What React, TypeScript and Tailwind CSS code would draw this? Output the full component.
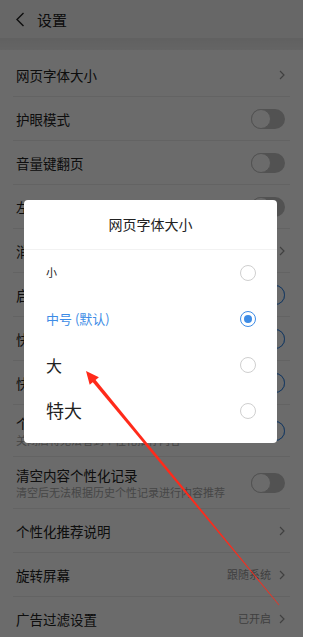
import React from 'react'

type Row = {
  title: string
  sub?: string
  toggle?: boolean
  on?: boolean
  value?: string
  chevron?: boolean
}

const rows: Row[] = [
  { title: '网页字体大小', chevron: true },
  { title: '护眼模式', toggle: true },
  { title: '音量键翻页', toggle: true },
  { title: '左手翻页模式', toggle: true },
  { title: '消息通知设置', chevron: true },
  { title: '启动时恢复上次浏览', toggle: true, on: true },
  { title: '快速翻页', toggle: true, on: true },
  { title: '快捷搜索', toggle: true, on: true },
  { title: '个性化推荐', sub: '关闭后将无法看到个性化推荐内容', toggle: true, on: true },
  { title: '清空内容个性化记录', sub: '清空后无法根据历史个性记录进行内容推荐', toggle: true },
  { title: '个性化推荐说明', chevron: true },
  { title: '旋转屏幕', value: '跟随系统', chevron: true },
  { title: '广告过滤设置', value: '已开启', chevron: true },
]

const options = [
  { label: '小', cls: 'text-[11px] text-[#222]' },
  { label: '中号 (默认)', cls: 'text-[13px] text-[#3d8ce6]', selected: true },
  { label: '大', cls: 'text-[16px] text-[#222]' },
  { label: '特大', cls: 'text-[18px] text-[#222]' },
]

function Chevron() {
  return (
    <svg width="6" height="10" viewBox="0 0 6 10" className="shrink-0">
      <path d="M1 1l4 4-4 4" fill="none" stroke="#9a9a9a" strokeWidth="1.2" />
    </svg>
  )
}

function Toggle({ on }: { on?: boolean }) {
  return (
    <div
      className={`relative w-[34px] h-[20px] rounded-full ${
        on ? 'bg-[#3d8ce6]' : 'bg-[#c4c4c4]'
      }`}
    >
      <div
        className={`absolute top-0 w-[20px] h-[20px] rounded-full bg-white border ${
          on ? 'right-0 border-[#3d8ce6]' : 'left-0 border-[#c4c4c4]'
        }`}
      />
    </div>
  )
}

function Radio({ selected }: { selected?: boolean }) {
  if (selected) {
    return (
      <div className="w-[16px] h-[16px] rounded-full border-[1.5px] border-[#3d8ce6] flex items-center justify-center">
        <div className="w-[8px] h-[8px] rounded-full bg-[#3d8ce6]" />
      </div>
    )
  }
  return <div className="w-[16px] h-[16px] rounded-full border border-[#cfcfcf]" />
}

export default function App() {
  return (
    <div className="relative w-[303px] h-[637px] overflow-hidden bg-white font-['Noto_Sans_CJK_SC',sans-serif]">
      {/* header */}
      <div className="h-[38px] bg-[#f5f5f5] flex items-center pl-[15px]">
        <svg width="10" height="15" viewBox="0 0 10 15">
          <path d="M8.5 1L2 7.5 8.5 14" fill="none" stroke="#222" strokeWidth="1.4" />
        </svg>
        <span className="ml-[12px] text-[15px] text-[#222] leading-none">设置</span>
      </div>
      <div className="h-[12px] bg-gradient-to-b from-[#e6e6e6] to-[#f0f0f0]" />

      {/* list */}
      <div className="pt-[3px]">
        {rows.map((r) => (
          <div
            key={r.title}
            className={`mx-[13px] pl-[3px] pr-[5px] flex items-center justify-between border-b border-[#ececec] ${
              r.sub ? 'h-[52px]' : 'h-[44px]'
            }`}
          >
            <div className="flex flex-col">
              <span className="text-[13.5px] text-[#222] leading-[20px]">{r.title}</span>
              {r.sub && (
                <span className="text-[11px] text-[#a8a8a8] leading-[14px] mb-[2px]">{r.sub}</span>
              )}
            </div>
            <div className="flex items-center gap-[8px]">
              {r.value && <span className="text-[11px] text-[#999]">{r.value}</span>}
              {r.toggle && <Toggle on={r.on} />}
              {r.chevron && <Chevron />}
            </div>
          </div>
        ))}
      </div>

      {/* dim overlay + dialog */}
      <div className="absolute inset-0 bg-black/[0.58] flex items-center justify-center">
        <div className="w-[253px] mt-[5px] -ml-[2px] bg-white rounded-[4px] pb-[9px]">
          <div className="h-[50px] flex items-center justify-center border-b border-[#f2f2f2]">
            <span className="text-[14px] text-[#222]">网页字体大小</span>
          </div>
          {options.map((o) => (
            <div key={o.label} className="h-[46px] flex items-center justify-between pl-[22px] pr-[21px]">
              <span className={o.cls}>{o.label}</span>
              <Radio selected={o.selected} />
            </div>
          ))}
        </div>
      </div>

      {/* red annotation arrow */}
      <svg className="absolute inset-0 pointer-events-none" width="303" height="637" viewBox="0 0 303 637">
        <polygon points="92.2,381.4 95,379.2 279.2,604.8 278.8,605.2" fill="#ff2a1a" />
        <polygon points="86,371 89.7,384.8 98.9,377.2" fill="#ff2a1a" />
      </svg>
    </div>
  )
}
